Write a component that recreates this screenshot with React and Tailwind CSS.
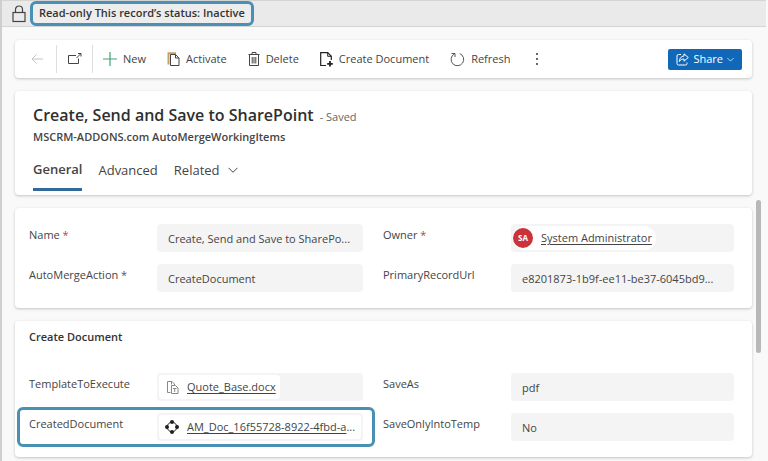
import React from "react";

const highlight = "border-[3px] border-[#4a90b5] rounded-md";

const Svg = ({ width = 14, height = 14, className = "", children }) => (
  <svg
    width={width}
    height={height}
    viewBox={`0 0 ${width} ${height}`}
    fill="none"
    stroke="currentColor"
    strokeWidth="1"
    className={`shrink-0 ${className}`}
    aria-hidden="true"
  >
    {children}
  </svg>
);

const LockIcon = () => (
  <Svg width={14} height={18} className="text-[#444444]">
    <rect x="1" y="7.5" width="12" height="9" strokeWidth="1.2" />
    <path d="M3.5 7.5V4.5a3.5 3.5 0 0 1 7 0v3" strokeWidth="1.2" />
  </Svg>
);

const BackIcon = () => (
  <Svg width={12} height={12}>
    <path d="M12 6H1M5.5 1.5L1 6l4.5 4.5" />
  </Svg>
);

const PopoutIcon = () => (
  <Svg>
    <path d="M8 3.5H.5v8h10V6.5M8.500 6l4-4M10 1.500h3V4.500" />
  </Svg>
);

const PlusIcon = () => (
  <Svg className="text-[#3fa277]">
    <path d="M7 0v14M0 7h14" strokeWidth="1.2" />
  </Svg>
);

const ActivateIcon = () => (
  <Svg width={13} height={14}>
    <path d="M1.500 12.500V1.200H9" stroke="#c9a063" strokeWidth="2" />
    <path d="M3.500 2.500h5l3.500 3.500v7.500H3.500z" />
    <path d="M8.500 2.500V6H12" />
  </Svg>
);

const TrashIcon = () => (
  <Svg width={12} height={14}>
    <path d="M.5 2.5h11M4 2.5V.5h4v2M1.500 2.5v11h9v-11M4.200 5v6.500M6 5v6.500M7.800 5v6.500" />
  </Svg>
);

const NewDocumentIcon = () => (
  <Svg width={13} height={15} className="text-[#222222]">
    <path d="M6 13.500H.700V.700h7l3.600 3.600V8" strokeWidth="1.2" />
    <path d="M7.700.700v3.600h3.600" />
    <path d="M10 9v5.500M7.200 11.800h5.600" strokeWidth="1.800" />
  </Svg>
);

const RefreshIcon = () => (
  <Svg width={15} height={15} className="text-[#555555]">
    <path d="M9.800 1.600a6.300 6.300 0 1 1-5.600.4M1.500 1.500h3.500v3.500" />
  </Svg>
);

const DotsIcon = () => (
  <Svg width={4} height={14}>
    <path d="M2 1v2M2 6v2M2 11v2" strokeWidth="1.600" />
  </Svg>
);

const ShareIcon = () => (
  <Svg width={13} height={13}>
    <path d="M5 1.500H2.500a1.500 1.500 0 0 0-1.500 1.500v7.500A1.500 1.500 0 0 0 2.500 12h7a1.500 1.500 0 0 0 1.500-1.500V9.500" />
    <path d="M8 .8l4.300 3.700L8 8.200V6C5.800 6 4.500 6.800 3.300 8.500 3.500 5.500 5 3.200 8 3z" />
  </Svg>
);

const ChevronIcon = ({ size = 10 }) => (
  <svg
    width={size}
    height={size}
    viewBox="0 0 10 10"
    fill="none"
    stroke="currentColor"
    aria-hidden="true"
  >
    <path d="M.5 2.800L5 7.300l4.500-4.500" />
  </svg>
);

const TemplateIcon = () => (
  <Svg width={12} height={13} className="text-[#888888]">
    <path d="M3.500 11.500h-3V.5H5l2.500 2.500v1M4.500.5V3.500" />
    <path d="M4.500 4.500h4l2.500 2.500v5.500H4.500zM6 7.500h3.500M7.700 7.500V11" />
  </Svg>
);

const DocumentRingIcon = () => (
  <Svg width={14} height={14} className="text-[#1f1f1f]">
    <circle cx="7" cy="7" r="4.800" strokeWidth="1" />
    <g fill="currentColor" stroke="none">
      <circle cx="7" cy="2" r="2" />
      <circle cx="7" cy="12" r="2" />
      <circle cx="2" cy="7" r="2" />
      <circle cx="12" cy="7" r="2" />
    </g>
  </Svg>
);

const commands = [
  { label: "New", icon: PlusIcon },
  { label: "Activate", icon: ActivateIcon },
  { label: "Delete", icon: TrashIcon },
  { label: "Create Document", icon: NewDocumentIcon },
  { label: "Refresh", icon: RefreshIcon },
];

const Card = ({ className = "", children }) => (
  <section
    className={`bg-white rounded-sm shadow-[0_1px_3px_rgba(0,0,0,0.22)] ${className}`}
  >
    {children}
  </section>
);

const Label = ({ htmlFor, required, star = "text-[#b04a4a]", children }) => (
  <label htmlFor={htmlFor} className="pt-[3px] leading-4 whitespace-nowrap">
    {children}
    {required && <span className={star}> *</span>}
  </label>
);

const Row = ({ highlighted, children }) => (
  <div className="relative grid grid-cols-[128px_minmax(0,1fr)]">
    {children}
    {highlighted && (
      <div
        className={`absolute -inset-x-3 -inset-y-1.5 pointer-events-none ${highlight}`}
      />
    )}
  </div>
);

const TextField = ({ id, label, value, required, star }) => (
  <Row>
    <Label htmlFor={id} required={required} star={star}>
      {label}
    </Label>
    <input
      id={id}
      readOnly
      defaultValue={value}
      className="w-full min-w-0 h-7 px-[11px] rounded-sm bg-[#f4f4f4] truncate outline-none"
    />
  </Row>
);

const LookupField = ({
  id,
  label,
  value,
  icon,
  required,
  highlighted,
  shortened,
  chip,
}) => (
  <Row highlighted={highlighted}>
    <Label htmlFor={id} required={required}>
      {label}
    </Label>
    <div className="h-7 p-0.5 rounded-sm bg-[#f4f4f4] flex items-center min-w-0">
      <div
        className={`h-6 flex items-center bg-white whitespace-nowrap ${chip}`}
      >
        {icon}
        <a id={id} href="#">
          <span className="underline underline-offset-2">{value}</span>
          {shortened && "..."}
        </a>
      </div>
    </div>
  </Row>
);

const App = () => {
  return (
    <div className="min-h-screen bg-[#f9f9f9] border-l-2 border-[#cfcfcf] font-['Open_Sans','Noto_Sans',sans-serif] text-[11px] text-[#444444]">
      <div className="h-[27px] mr-0.5 pl-2.5 flex items-center gap-1 bg-[#eaeaea] border-y border-[#d4d4d4]">
        <LockIcon />
        <div
          className={`h-[25px] px-1.5 flex items-center bg-[#ededed] font-semibold text-[#333333] whitespace-nowrap ${highlight}`}
        >
          Read-only This record’s status: Inactive
        </div>
      </div>

      <div className="flex">
        <main className="flex-1 min-w-0 pl-[13px] pr-1 pt-[13px] flex flex-col gap-[13px]">
          <Card className="h-[38px] pr-2.5 flex items-center">
            <button className="w-[41px] pl-4 text-[#c4c4c4]" aria-label="Back">
              <BackIcon />
            </button>
            <div className="w-px h-7 bg-[#dedede]" />
            <button className="w-[35px] pl-[11px]" aria-label="Open in new window">
              <PopoutIcon />
            </button>
            <div className="w-px h-7 bg-[#dedede]" />
            <div className="flex items-center gap-[21px] pl-2.5">
              {commands.map(({ label, icon: Icon }) => (
                <button
                  key={label}
                  className="flex items-center gap-1.5 whitespace-nowrap"
                >
                  <Icon />
                  {label}
                </button>
              ))}
              <button className="pl-1" aria-label="More commands">
                <DotsIcon />
              </button>
            </div>
            <button className="ml-auto h-[21px] px-2 flex items-center gap-1 rounded-xs bg-[#1268b8] text-white font-medium">
              <ShareIcon />
              Share
              <ChevronIcon size={7} />
            </button>
          </Card>

          <Card className="h-[104px] px-[18px] pt-3">
            <h1 className="flex items-baseline gap-1.5 leading-6 text-base font-semibold text-[#2f2f2f] whitespace-nowrap">
              Create, Send and Save to SharePoint
              <span className="text-[11px] font-normal text-[#666666]">
                - Saved
              </span>
            </h1>
            <p className="leading-4 font-semibold">
              MSCRM-ADDONS.com AutoMergeWorkingItems
            </p>
            <nav className="pt-4 flex gap-4 text-[13px]">
              <button className="h-[30px] pb-3 border-b-[3px] border-[#31699b] leading-4 font-semibold">
                General
              </button>
              <button className="h-[30px] pb-3 leading-4">Advanced</button>
              <button className="h-[30px] pb-3 leading-4 flex items-center gap-2">
                Related
                <ChevronIcon />
              </button>
            </nav>
          </Card>

          <Card className="pl-3.5 pr-[18px] py-4 grid grid-cols-[334fr_351fr] gap-x-5 gap-y-3">
            <TextField
              id="name"
              label="Name"
              value="Create, Send and Save to SharePo..."
              required
            />
            <LookupField
              id="owner"
              label="Owner"
              value="System Administrator"
              required
              chip="rounded-full gap-2 pr-1"
              icon={
                <span className="w-5 h-5 shrink-0 rounded-full bg-[#cc3338] text-white text-[8px] font-bold flex items-center justify-center">
                  SA
                </span>
              }
            />
            <TextField
              id="action"
              label="AutoMergeAction"
              value="CreateDocument"
              required
              star="text-[#555555]"
            />
            <TextField
              id="record-url"
              label="PrimaryRecordUrl"
              value="e8201873-1b9f-ee11-be37-6045bd9..."
            />
          </Card>

          <Card className="pl-3.5 pr-[18px] pt-2 pb-4">
            <h2 className="leading-4 mb-7 font-semibold text-[#333333]">
              Create Document
            </h2>
            <div className="grid grid-cols-[334fr_351fr] gap-x-5 gap-y-3">
              <LookupField
                id="template"
                label="TemplateToExecute"
                value="Quote_Base.docx"
                chip="rounded-sm gap-2 pl-2 pr-1"
                icon={<TemplateIcon />}
              />
              <TextField id="save-as" label="SaveAs" value="pdf" />
              <LookupField
                id="created"
                label="CreatedDocument"
                value="AM_Doc_16f55728-8922-4fbd-a"
                shortened
                highlighted
                chip="flex-1 rounded-sm gap-2 pl-1.5"
                icon={<DocumentRingIcon />}
              />
              <TextField id="save-temp" label="SaveOnlyIntoTemp" value="No" />
            </div>
          </Card>
        </main>
        <div className="w-3 pt-[173px]">
          <div className="w-[5px] h-[153px] rounded-full bg-[#b8b8b8]" />
        </div>
      </div>
    </div>
  );
};

export default App;
